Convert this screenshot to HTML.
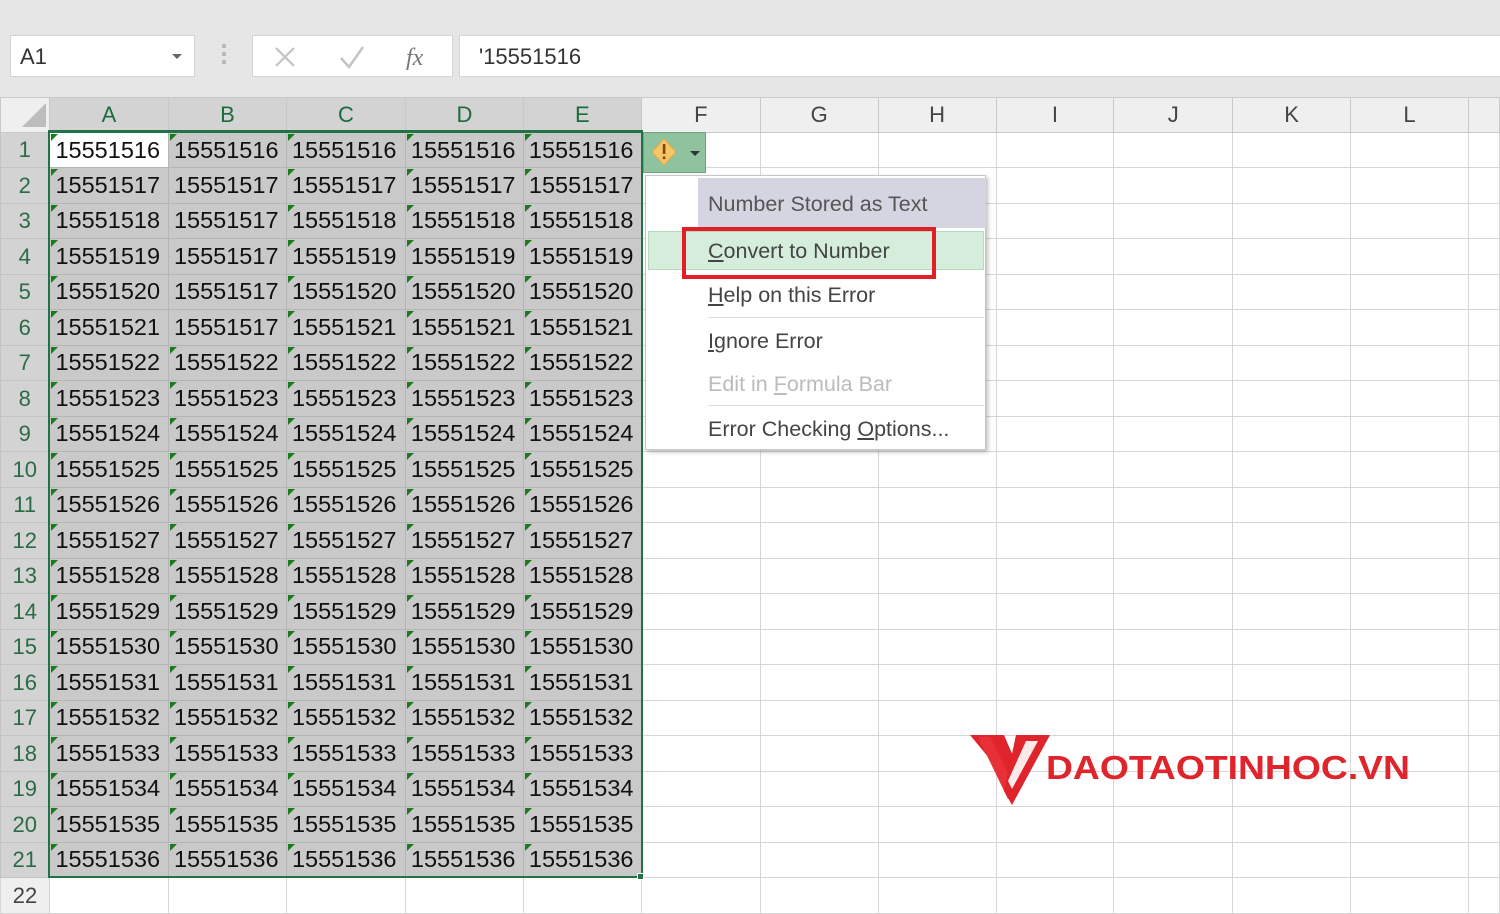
<!DOCTYPE html>
<html><head><meta charset="utf-8"><style>
*{margin:0;padding:0;box-sizing:border-box}
body{width:1500px;height:900px;overflow:hidden;background:#fff;font-family:"Liberation Sans",sans-serif;position:relative}
.top{position:absolute;left:0;top:0;width:1500px;height:97px;background:#e6e6e6}
.nb{position:absolute;left:10px;top:35px;width:185px;height:42px;background:#fff;border:1px solid #d4d4d4;font-size:22px;color:#333;padding:8px 0 0 9px}
.nb .ar{position:absolute;right:12px;top:18px;border:5px solid transparent;border-top:5px solid #666}
.dots{position:absolute;left:222px;top:44px;width:4px;height:22px;background:repeating-linear-gradient(#bbb 0 4px,transparent 4px 8px)}
.fb{position:absolute;left:252px;top:35px;width:201px;height:42px;background:#fff;border:1px solid #d4d4d4}
.fi{position:absolute;left:459px;top:35px;width:1050px;height:42px;background:#fff;border:1px solid #d4d4d4;font-size:22px;color:#333;padding:8px 0 0 19px}
table{position:absolute;left:0;top:97px;border-collapse:collapse;table-layout:fixed}
td{height:35.5px;border:1px solid #d6d6d6;font-size:23.5px;color:#111;padding:0 0 0 5px;white-space:nowrap;overflow:hidden;position:relative;line-height:33px}
tr.h td{height:34px;background:#efefef;color:#444;text-align:center;padding:0;font-size:22px;border-color:#c8c8c8}
tr.h td.s{background:#d3d3d3;color:#1e6b3e;border-bottom:2px solid #217346}
td.r{background:#d3d3d3;color:#2b6b45;text-align:center;padding:0;font-size:22px;border-color:#c3c3c3;border-right:2px solid #217346}
td.r2{background:#efefef;color:#444;text-align:center;padding:0;font-size:22px}
td.g{background:#c9c9c9;border-color:#b5b5b5}
td.g.t::before{content:"";position:absolute;left:1px;top:1px;border-top:7px solid #1b7a1b;border-right:7px solid transparent}
td.w{background:#fff}
.sel{position:absolute;left:48px;top:130px;width:595px;height:748px;border:2px solid #217346}
.hnd{position:absolute;left:637px;top:873px;width:7px;height:7px;background:#217346;border:1px solid #fff}
.corner{position:absolute;left:22px;top:103px;border-left:24px solid transparent;border-bottom:24px solid #bdbdbd}
.eb{position:absolute;left:643px;top:132px;width:63px;height:41px;background:#8fc29f;border:1px solid #6aa57d}
.menu{position:absolute;left:645px;top:175px;width:341px;height:275px;background:#fff;border:1px solid #c6c6c6;box-shadow:2px 2px 4px rgba(0,0,0,.25);font-size:21.5px;color:#444}
.menu .hd{position:absolute;left:52px;top:2px;width:288px;height:50px;background:#d5d5e1;padding:14px 0 0 10px;color:#555}
.menu .hi{position:absolute;left:2px;top:55px;width:336px;height:39px;background:#d5eedc;border:1px solid #b3d9be}
.menu .it{position:absolute;left:62px}
.menu .sep{position:absolute;left:62px;width:276px;height:1px;background:#dcdcdc}
.red{position:absolute;left:682px;top:227px;width:254px;height:52px;border:4px solid #e21f26}
u{text-decoration:underline}
</style></head><body>
<div class="top"></div>
<div class="nb">A1<span class="ar"></span></div>
<div class="dots"></div>
<div class="fb">
<svg width="201" height="42" style="position:absolute;left:0;top:0"><path d="M23 12 L41 30 M41 12 L23 30" stroke="#c3c3c3" stroke-width="2.2" fill="none"/><path d="M88 22 L96 31 L110 11" stroke="#c3c3c3" stroke-width="2.5" fill="none"/><text x="153" y="29" font-family="Liberation Serif" font-style="italic" font-size="24" fill="#777">fx</text></svg>
</div>
<div class="fi">'15551516</div>
<table>
<colgroup><col style="width:49px"><col style="width:119px"><col style="width:118px"><col style="width:119px"><col style="width:118px"><col style="width:118px"><col style="width:119px"><col style="width:118px"><col style="width:118px"><col style="width:118px"><col style="width:119px"><col style="width:118px"><col style="width:118px"><col style="width:31px"></colgroup>
<tr class="h"><td></td><td class="s">A</td><td class="s">B</td><td class="s">C</td><td class="s">D</td><td class="s">E</td><td>F</td><td>G</td><td>H</td><td>I</td><td>J</td><td>K</td><td>L</td><td></td></tr>
<tr><td class="r">1</td><td class="w t g" style="background:#fff">15551516</td><td class="g t">15551516</td><td class="g t">15551516</td><td class="g t">15551516</td><td class="g t">15551516</td><td></td><td></td><td></td><td></td><td></td><td></td><td></td><td></td></tr>
<tr><td class="r">2</td><td class="g t">15551517</td><td class="g">15551517</td><td class="g t">15551517</td><td class="g t">15551517</td><td class="g t">15551517</td><td></td><td></td><td></td><td></td><td></td><td></td><td></td><td></td></tr>
<tr><td class="r">3</td><td class="g t">15551518</td><td class="g">15551517</td><td class="g t">15551518</td><td class="g t">15551518</td><td class="g t">15551518</td><td></td><td></td><td></td><td></td><td></td><td></td><td></td><td></td></tr>
<tr><td class="r">4</td><td class="g t">15551519</td><td class="g">15551517</td><td class="g t">15551519</td><td class="g t">15551519</td><td class="g t">15551519</td><td></td><td></td><td></td><td></td><td></td><td></td><td></td><td></td></tr>
<tr><td class="r">5</td><td class="g t">15551520</td><td class="g">15551517</td><td class="g t">15551520</td><td class="g t">15551520</td><td class="g t">15551520</td><td></td><td></td><td></td><td></td><td></td><td></td><td></td><td></td></tr>
<tr><td class="r">6</td><td class="g t">15551521</td><td class="g">15551517</td><td class="g t">15551521</td><td class="g t">15551521</td><td class="g t">15551521</td><td></td><td></td><td></td><td></td><td></td><td></td><td></td><td></td></tr>
<tr><td class="r">7</td><td class="g t">15551522</td><td class="g t">15551522</td><td class="g t">15551522</td><td class="g t">15551522</td><td class="g t">15551522</td><td></td><td></td><td></td><td></td><td></td><td></td><td></td><td></td></tr>
<tr><td class="r">8</td><td class="g t">15551523</td><td class="g t">15551523</td><td class="g t">15551523</td><td class="g t">15551523</td><td class="g t">15551523</td><td></td><td></td><td></td><td></td><td></td><td></td><td></td><td></td></tr>
<tr><td class="r">9</td><td class="g t">15551524</td><td class="g t">15551524</td><td class="g t">15551524</td><td class="g t">15551524</td><td class="g t">15551524</td><td></td><td></td><td></td><td></td><td></td><td></td><td></td><td></td></tr>
<tr><td class="r">10</td><td class="g t">15551525</td><td class="g t">15551525</td><td class="g t">15551525</td><td class="g t">15551525</td><td class="g t">15551525</td><td></td><td></td><td></td><td></td><td></td><td></td><td></td><td></td></tr>
<tr><td class="r">11</td><td class="g t">15551526</td><td class="g t">15551526</td><td class="g t">15551526</td><td class="g t">15551526</td><td class="g t">15551526</td><td></td><td></td><td></td><td></td><td></td><td></td><td></td><td></td></tr>
<tr><td class="r">12</td><td class="g t">15551527</td><td class="g t">15551527</td><td class="g t">15551527</td><td class="g t">15551527</td><td class="g t">15551527</td><td></td><td></td><td></td><td></td><td></td><td></td><td></td><td></td></tr>
<tr><td class="r">13</td><td class="g t">15551528</td><td class="g t">15551528</td><td class="g t">15551528</td><td class="g t">15551528</td><td class="g t">15551528</td><td></td><td></td><td></td><td></td><td></td><td></td><td></td><td></td></tr>
<tr><td class="r">14</td><td class="g t">15551529</td><td class="g t">15551529</td><td class="g t">15551529</td><td class="g t">15551529</td><td class="g t">15551529</td><td></td><td></td><td></td><td></td><td></td><td></td><td></td><td></td></tr>
<tr><td class="r">15</td><td class="g t">15551530</td><td class="g t">15551530</td><td class="g t">15551530</td><td class="g t">15551530</td><td class="g t">15551530</td><td></td><td></td><td></td><td></td><td></td><td></td><td></td><td></td></tr>
<tr><td class="r">16</td><td class="g t">15551531</td><td class="g t">15551531</td><td class="g t">15551531</td><td class="g t">15551531</td><td class="g t">15551531</td><td></td><td></td><td></td><td></td><td></td><td></td><td></td><td></td></tr>
<tr><td class="r">17</td><td class="g t">15551532</td><td class="g t">15551532</td><td class="g t">15551532</td><td class="g t">15551532</td><td class="g t">15551532</td><td></td><td></td><td></td><td></td><td></td><td></td><td></td><td></td></tr>
<tr><td class="r">18</td><td class="g t">15551533</td><td class="g t">15551533</td><td class="g t">15551533</td><td class="g t">15551533</td><td class="g t">15551533</td><td></td><td></td><td></td><td></td><td></td><td></td><td></td><td></td></tr>
<tr><td class="r">19</td><td class="g t">15551534</td><td class="g t">15551534</td><td class="g t">15551534</td><td class="g t">15551534</td><td class="g t">15551534</td><td></td><td></td><td></td><td></td><td></td><td></td><td></td><td></td></tr>
<tr><td class="r">20</td><td class="g t">15551535</td><td class="g t">15551535</td><td class="g t">15551535</td><td class="g t">15551535</td><td class="g t">15551535</td><td></td><td></td><td></td><td></td><td></td><td></td><td></td><td></td></tr>
<tr><td class="r">21</td><td class="g t">15551536</td><td class="g t">15551536</td><td class="g t">15551536</td><td class="g t">15551536</td><td class="g t">15551536</td><td></td><td></td><td></td><td></td><td></td><td></td><td></td><td></td></tr>
<tr><td class="r2">22</td><td></td><td></td><td></td><td></td><td></td><td></td><td></td><td></td><td></td><td></td><td></td><td></td><td></td></tr>
</table>
<div class="corner"></div>
<div class="sel"></div>
<div class="hnd"></div>
<div class="eb"><svg width="63" height="41"><path d="M20 6 L32 19 L20 32 L8 19 Z" fill="#f6c56a" stroke="#e8a840" stroke-width="1"/><rect x="18.8" y="11" width="2.6" height="10" fill="#7a4a00"/><rect x="18.8" y="23.5" width="2.6" height="2.6" fill="#7a4a00"/><path d="M46 18 L56 18 L51 23 Z" fill="#333"/></svg></div>
<div class="menu">
<div class="hd">Number Stored as Text</div>
<div class="hi"></div>
<div class="it" style="top:63px"><u>C</u>onvert to Number</div>
<div class="it" style="top:107px"><u>H</u>elp on this Error</div>
<div class="sep" style="top:141px"></div>
<div class="it" style="top:153px"><u>I</u>gnore Error</div>
<div class="it" style="top:196px;color:#bbb">Edit in <u>F</u>ormula Bar</div>
<div class="sep" style="top:229px"></div>
<div class="it" style="top:241px">Error Checking <u>O</u>ptions...</div>
</div>
<div class="red"></div>
<svg style="position:absolute;left:968px;top:733px" width="450" height="75">
<path d="M2 2 L36 2 L48 30 L40 48 Z" fill="#e0242b"/>
<path d="M10 4 L40 66 L50 60 L22 4 Z" fill="#e83038"/>
<path d="M48 2 L82 2 L44 72 L36 58 Z" fill="#e0242b"/>
<path d="M58 8 L70 8 L44 56 L40 48 Z" fill="#fff" opacity=".9"/>
<text x="78" y="46" font-family="Liberation Sans" font-weight="bold" font-size="33" fill="#e0242b" textLength="364" lengthAdjust="spacingAndGlyphs">DAOTAOTINHOC.VN</text>
</svg>
</body></html>
